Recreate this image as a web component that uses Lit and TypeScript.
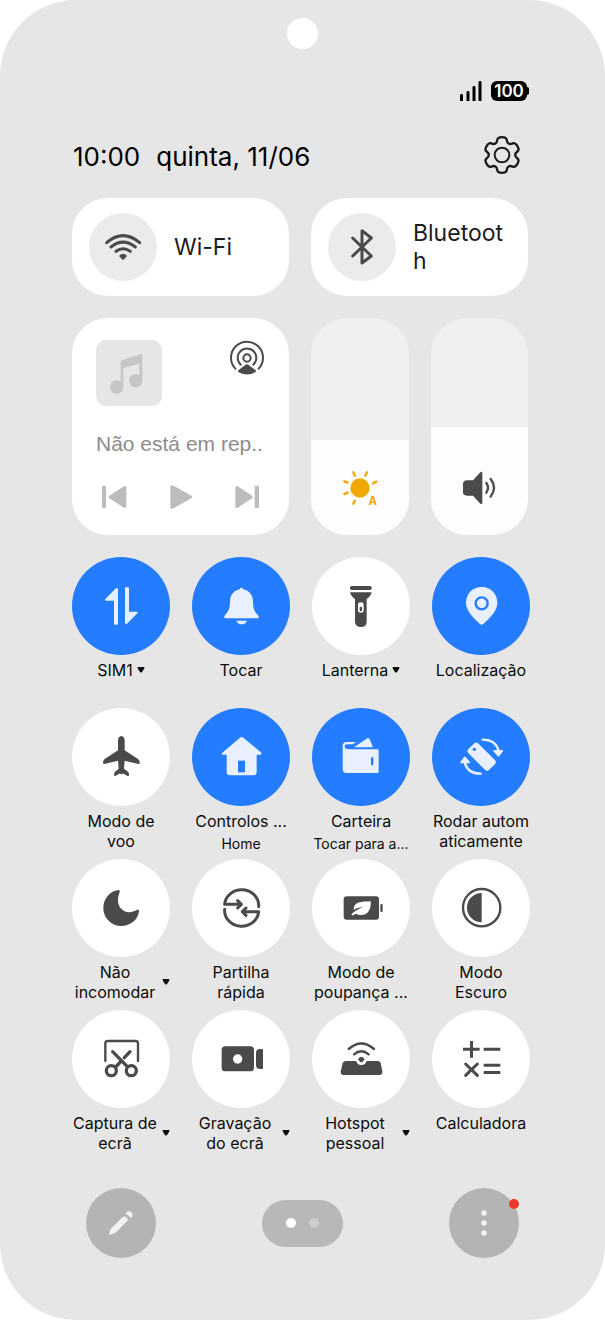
import { LitElement, html, svg, css, nothing } from "lit";
import { customElement, property, state } from "lit/decorators.js";
import { classMap } from "lit/directives/class-map.js";
import { styleMap } from "lit/directives/style-map.js";

const ACCENT = "#247cff";

// Each icon carries the centre of its drawing; the view box is built around it at 3 units per pixel.
interface Icon {
  cx: number;
  cy: number;
  art: unknown;
}

function gearPath(): string {
  const pts: [number, number][] = [];
  for (let k = 0; k < 6; k++) {
    for (const [r, d] of [[40, -22], [55, -14], [55, 14], [40, 22]]) {
      const a = ((k * 60 + d) * Math.PI) / 180;
      pts.push([Math.sin(a) * r, -Math.cos(a) * r]);
    }
  }
  const mid = (i: number) => {
    const p = pts[i % pts.length];
    const q = pts[(i + 1) % pts.length];
    return `${((p[0] + q[0]) / 2).toFixed(1)} ${((p[1] + q[1]) / 2).toFixed(1)}`;
  };
  let d = `M${mid(0)}`;
  for (let i = 1; i <= pts.length; i++) {
    const p = pts[i % pts.length];
    d += `Q${p[0].toFixed(1)} ${p[1].toFixed(1)} ${mid(i)}`;
  }
  return d + "z";
}

const line = (d: string, w: number) =>
  svg`<path d=${d} fill="none" stroke="currentColor" stroke-width=${w} stroke-linecap="round" stroke-linejoin="round"/>`;

const icons: Record<string, Icon> = {
  gear: {
    cx: 0, cy: 0,
    art: svg`${line(gearPath(), 7)}<circle r="22" fill="none" stroke="currentColor" stroke-width="6"/>`,
  },
  wifi: {
    cx: 189, cy: 170,
    art: svg`${line("M140 157Q189 115 239 157", 9)}${line("M153 170Q189 141 226 170", 9)}${line("M168 183Q189 168 211 183", 9)}
      <path d="M177 197Q189 183 201 197L192 207q-3 3-6 0z"/>`,
  },
  bluetooth: {
    cx: 906, cy: 170,
    art: line("M878 143L934 197L906 218V121L934 143L878 197", 9),
  },
  cast: {
    cx: 560, cy: 146,
    art: svg`${line("M525 178A48 48 0 1 1 595 178", 6)}${line("M541 166A28 28 0 1 1 579 166", 6)}
      <circle cx="560" cy="146" r="11" fill="none" stroke="currentColor" stroke-width="6"/>
      <path d="M556 166q4-3 8 0L586 183q2 3-1 6q-25 13-50 0q-3-3-1-6z"/>`,
  },
  note: {
    cx: 207, cy: 189,
    art: svg`<circle cx="170" cy="231" r="20"/><circle cx="227" cy="212" r="20"/>
      <path d="M182 155q0-3 3-4L244 132q3-1 3 3V212H238V161L190 174V231H182z"/>`,
  },
  previous: {
    cx: 164, cy: 562,
    art: svg`<rect x="128" y="528" width="12" height="67" rx="2"/><path d="M201 534V590q-1 7-7 4L150 566q-5-4 0-8L194 530q6-3 7 4z"/>`,
  },
  play: {
    cx: 368, cy: 562,
    art: svg`<path d="M336 531q1-6 7-4L400 558q4 4 0 7L343 597q-7 2-7-4z"/>`,
  },
  next: {
    cx: 560, cy: 562,
    art: svg`<rect x="583" y="528" width="13" height="67" rx="2"/><path d="M525 534V590q1 7 7 4L575 566q5-4 0-8L532 530q-6-3-7 4z"/>`,
  },
  sun: {
    cx: 179, cy: 533,
    art: svg`<circle cx="179" cy="533" r="29"/>
      ${line("M159 486L164 496M200 486L195 496M132 513L142 517M228 514L218 519M132 551L142 547M164 571L159 580", 7)}
      <text x="217" y="584" text-anchor="middle" font-size="34" font-weight="700">A</text>`,
  },
  speaker: {
    cx: 537, cy: 533,
    art: svg`<path d="M489 522q0-12 12-12H519L541 486q6-4 6 2V578q0 5-6 2L519 556H501q-12 0-12-10z"/>
      ${line("M559 518Q569 532 559 547", 7)}${line("M572 506Q592 532 572 559", 7)}`,
  },
  data: {
    cx: 183, cy: 180,
    art: svg`<path d="M174 129V233q0 3-3 3H165q-3 0-3-3V164H138q-5-1-2-5L168 127q5-3 6 2zM195 127q0-3 3-3H204q3 0 3 3V197H230q5 1 2 5L201 233q-5 3-6-2z"/>`,
  },
  bell: {
    cx: 543, cy: 180,
    art: svg`<path d="M545 125c3 0 4 2 5 5c18 4 29 17 29 36c0 22 4 30 16 43q4 8-4 8H498q-8 0-4-8c12-13 16-21 16-43c0-19 11-32 29-36c1-3 2-5 6-5z"/>
      <path d="M529 224H561q-4 11-16 11t-16-11z"/>`,
  },
  torch: {
    cx: 184, cy: 180,
    art: svg`<rect x="151" y="120" width="65" height="12" rx="5"/>
      <path d="M151 139H216q-2 11-15 20V228q0 15-17 15t-18-15V159q-13-9-15-20z"/>
      <rect x="175" y="169" width="17" height="31" rx="8" fill="#fff"/><rect x="180" y="182" width="7" height="14" rx="3"/>`,
  },
  pin: {
    cx: 544, cy: 180,
    art: svg`<path d="M546 123c27 0 47 20 47 47c0 22-17 41-42 64q-5 4-10 0c-25-23-42-42-42-64c0-27 20-47 47-47z"/>
      <circle cx="546" cy="172" r="18" fill="none" stroke=${ACCENT} stroke-width="7"/>`,
  },
  plane: {
    cx: 183, cy: 170,
    art: svg`<path d="M184 107c7 0 10 7 10 14V150L234 176q6 4 5 13q-1 3-4 2L194 181L192 205L204 214q4 4 3 11q-1 3-4 2L190 220q-3-1-6 3q-3-4-6-3L166 227q-4 0-4-3q0-6 3-10L176 205L174 181L133 191q-4 0-4-3q0-8 5-12L174 150V121c0-7 3-14 10-14z"/>`,
  },
  home: {
    cx: 543, cy: 170,
    art: svg`<path d="M540 112q5-4 10 0L604 157q2 5-3 6H590V215q0 10-10 10H510q-10 0-10-10V163H488q-4-2-2-5z"/>
      <rect x="534" y="181" width="21" height="35" fill=${ACCENT}/>`,
  },
  wallet: {
    cx: 184, cy: 170,
    art: svg`<path d="M129 137q0-12 12-12H169L159 132H142q-7 0-7 6q0 9 14 9H234q3 0 3 3V214q0 4-4 4H141q-12 0-12-12z"/>
      <path d="M163 141L203 114q5-2 7 3L220 141z"/><rect x="214" y="171" width="7" height="24" rx="3" fill=${ACCENT}/>`,
  },
  rotate: {
    cx: 544, cy: 170,
    art: svg`<rect x="525" y="125" width="42" height="88" rx="9" transform="rotate(-45 546 169)"/>
      <circle cx="524" cy="147" r="5" fill=${ACCENT}/>
      ${line("M549 118Q588 118 597 152", 7)}${line("M543 220Q504 220 495 186", 7)}
      <path d="M583 149H608q4 1 2 4L599 168q-3 2-5 0L581 153q-1-3 2-4zM509 189H484q-4-1-2-4L493 170q3-2 5 0L511 185q1 3-2 4z"/>`,
  },
  moon: {
    cx: 183, cy: 158,
    art: svg`<path d="M175 104q6 0 4 6c-7 20-8 38 6 52c14 13 32 9 47 1q6-1 5 5c-3 26-26 44-53 44a54 54 0 0 1-54-54c0-28 19-50 45-54z"/>`,
  },
  share: {
    cx: 543, cy: 158,
    art: svg`${line("M596 154A51 47 0 0 0 494 147H543M533 136L544 147L533 158", 9)}
      ${line("M494 162A51 47 0 0 0 596 169H548M558 158L547 169L558 180", 9)}`,
  },
  eco: {
    cx: 184, cy: 158,
    art: svg`<rect x="132" y="123" width="106" height="70" rx="9"/><rect x="242" y="146" width="7" height="24" rx="3"/>
      <path fill="#fff" d="M213 138c2 24-8 41-28 41c-8 0-12-2-16-4l-9 5q-5 1-4-4q10-10 34-21q-19 2-28 9c-1-25 24-25 51-26z"/>`,
  },
  contrast: {
    cx: 544, cy: 158,
    art: svg`<circle cx="546" cy="157" r="56" fill="none" stroke="currentColor" stroke-width="7"/><path d="M546 113A44 44 0 0 0 546 201z"/>`,
  },
  scissors: {
    cx: 183, cy: 612,
    art: svg`${line("M136 618V565q0-7 7-7H227q7 0 7 7V618", 7)}
      <circle cx="154" cy="647" r="15" fill="none" stroke="currentColor" stroke-width="10"/>
      <circle cx="214" cy="647" r="15" fill="none" stroke="currentColor" stroke-width="10"/>
      ${line("M158 590L202 635M210 590L193 608M180 622L167 636", 10)}`,
  },
  recorder: {
    cx: 543, cy: 612,
    art: svg`<rect x="485" y="574" width="97" height="75" rx="11"/><circle cx="533" cy="612" r="14" fill="#fff"/>
      <path d="M606 582q3 0 3 3V639q0 3-3 3H600q-12 0-12-11V593q0-11 12-11z"/>`,
  },
  hotspot: {
    cx: 184, cy: 612,
    art: svg`${line("M147 582Q185 549 223 582", 7)}${line("M163 598Q185 579 207 598", 7)}
      <path d="M138 618H234q7 0 9 7L248 649q1 11-9 11H132q-10 0-9-11L129 625q2-7 9-7z"/>
      <circle cx="185" cy="614" r="16" fill="#fff"/><path d="M176 611q9-11 18 0q2 4-3 7l-3 3q-3 2-6 0l-3-3q-5-3-3-7z"/>`,
  },
  calculator: {
    cx: 544, cy: 612,
    art: svg`<path d="M511 558h9v20h20v9H520v21H511V587H490V578h21zM552 578h50v9h-50zM552 626h50v9h-50zM552 648h50v9h-50z"/>
      ${line("M498 627L533 661M533 627L498 661", 9)}`,
  },
  pencil: {
    cx: 183, cy: 162,
    art: svg`<path d="M147 196L151 182Q152 179 155 176L189 143q4-3 8 0l5 5q4 4 0 8L169 189q-3 3-6 4L150 198q-3 1-3-2zM197 134l5-6q6-4 11 1q5 4 5 9q-1 4-7 10q0-7-14-14z"/>`,
  },
  more: {
    cx: 1272, cy: 162,
    art: svg`<circle cx="1272" cy="132" r="8"/><circle cx="1272" cy="162" r="8"/><circle cx="1272" cy="192" r="8"/>`,
  },
};

const icon = (name: string) => {
  const { cx, cy, art } = icons[name];
  return html`<svg class="icon" viewBox="${cx - 72} ${cy - 72} 144 144" aria-hidden="true">${art}</svg>`;
};

interface Tile {
  icon: string;
  lines: string[];
  sub?: string;
  on?: boolean;
  menu?: boolean;
}

const TILES: Tile[] = [
  { icon: "data", lines: ["SIM1"], on: true, menu: true },
  { icon: "bell", lines: ["Tocar"], on: true },
  { icon: "torch", lines: ["Lanterna"], menu: true },
  { icon: "pin", lines: ["Localização"], on: true },
  { icon: "plane", lines: ["Modo de", "voo"] },
  { icon: "home", lines: ["Controlos ..."], sub: "Home", on: true },
  { icon: "wallet", lines: ["Carteira"], sub: "Tocar para a...", on: true },
  { icon: "rotate", lines: ["Rodar autom", "aticamente"], on: true },
  { icon: "moon", lines: ["Não", "incomodar"], menu: true },
  { icon: "share", lines: ["Partilha", "rápida"] },
  { icon: "eco", lines: ["Modo de", "poupança ..."] },
  { icon: "contrast", lines: ["Modo", "Escuro"] },
  { icon: "scissors", lines: ["Captura de", "ecrã"], menu: true },
  { icon: "recorder", lines: ["Gravação", "do ecrã"], menu: true },
  { icon: "hotspot", lines: ["Hotspot", "pessoal"], menu: true },
  { icon: "calculator", lines: ["Calculadora"] },
];

const shared = css`
  * { box-sizing: border-box; }
  button {
    appearance: none;
    border: 0;
    margin: 0;
    padding: 0;
    background: none;
    color: inherit;
    font: inherit;
    cursor: pointer;
  }
  .icon {
    display: block;
    flex: none;
    width: 48px;
    height: 48px;
    fill: currentColor;
    font-family: Inter, sans-serif;
  }
`;

@customElement("quick-tile")
class QuickTile extends LitElement {
  @property({ attribute: false }) tile!: Tile;

  static styles = [
    shared,
    css`
      :host { display: block; }
      .tile { display: flex; flex-direction: column; align-items: center; gap: 5px; width: 100%; color: #0c0c0c; }
      .disc {
        display: flex;
        align-items: center;
        justify-content: center;
        width: 98px;
        height: 98px;
        border-radius: 50%;
        background: #fff;
        color: #4a4a4a;
      }
      .on { background: #247cff; color: #e8f0ff; }
      .caption { display: flex; align-items: center; justify-content: center; gap: 4px; width: 100%; font-size: 16px; line-height: 20px; }
      .text { display: flex; flex-direction: column; align-items: center; white-space: nowrap; }
      .wide .text { flex: 1; min-width: 0; }
      .sub { margin-top: 3px; font-size: 14px; }
      .arrow { flex: none; width: 8px; height: 10px; fill: currentColor; }
    `,
  ];

  render() {
    const t = this.tile;
    return html`<button class="tile" aria-pressed=${t.on ? "true" : "false"}>
      <span class=${classMap({ disc: true, on: !!t.on })}>${icon(t.icon)}</span>
      <span class=${classMap({ caption: true, wide: !!t.menu && t.lines.length > 1 })}>
        <span class="text">
          ${t.lines.map((l) => html`<span>${l}</span>`)}
          ${t.sub ? html`<span class="sub">${t.sub}</span>` : nothing}
        </span>
        ${t.menu ? html`<svg class="arrow" viewBox="0 0 8 10" aria-hidden="true"><path d="M1 2H7Q8 2 7 4L5 7Q4 8 3 7L1 4Q0 2 1 2z"/></svg>` : nothing}
      </span>
    </button>`;
  }
}

@customElement("level-slider")
class LevelSlider extends LitElement {
  @property() icon = "";
  @property() label = "";
  @property({ type: Number }) value = 50;

  static styles = [
    shared,
    css`
      :host { display: block; position: relative; }
      .range {
        appearance: none;
        display: block;
        writing-mode: vertical-lr;
        direction: rtl;
        width: 100%;
        height: 217px;
        margin: 0;
        border-radius: 36px;
        background: linear-gradient(to top, #fdfdfd var(--level), #efefef var(--level));
      }
      .range::-webkit-slider-thumb { appearance: none; width: 1px; height: 1px; opacity: 0; }
      .glyph { position: absolute; left: 0; right: 0; bottom: 23px; display: flex; justify-content: center; color: #4a4a4a; pointer-events: none; }
      .sun { color: #f0a800; }
    `,
  ];

  private onInput(e: Event) {
    this.value = Number((e.target as HTMLInputElement).value);
  }

  render() {
    return html`<input class="range" type="range" min="0" max="100" aria-label=${this.label}
        .value=${String(this.value)} @input=${this.onInput} style=${styleMap({ "--level": `${this.value}%` })} />
      <span class=${classMap({ glyph: true, sun: this.icon === "sun" })}>${icon(this.icon)}</span>`;
  }
}

@customElement("app-root")
class AppRoot extends LitElement {
  @state() private page = 0;

  static styles = [
    shared,
    css`
      :host { display: block; background: #fff; font-family: Inter, "Noto Sans", sans-serif; color: #0c0c0c; }
      .phone { display: flex; flex-direction: column; min-height: 100vh; padding-top: 18px; border-radius: 76px; background: #e6e6e6; }
      .camera { align-self: center; width: 31px; height: 31px; border-radius: 50%; background: #fff; }
      .status { display: flex; justify-content: flex-end; align-items: center; gap: 8px; height: 20px; margin: 32px 76px 0 72px; }
      .signal { width: 23px; height: 20px; }
      .battery { display: flex; align-items: center; }
      .charge { width: 36px; height: 20px; border-radius: 6px; background: #000; color: #fff; font-size: 17px; font-weight: 600; line-height: 20px; text-align: center; }
      .tip { width: 2px; height: 8px; border-radius: 0 2px 2px 0; background: #000; }
      .header { display: flex; align-items: center; justify-content: space-between; height: 48px; margin: 30px 79px 0 73px; }
      .clock { display: flex; gap: 16px; margin: 0; padding-top: 4px; font-size: 26px; font-weight: 400; line-height: 32px; color: #000; }
      .settings { color: #1c1c1c; }
      .cards { display: grid; grid-template-columns: repeat(2, minmax(0, 1fr)); gap: 22px; margin: 19px 77px 0 72px; }
      .toggle { display: flex; align-items: center; gap: 17px; height: 98px; padding: 0 17px; border-radius: 36px; background: #fff; text-align: left; }
      .ring { display: flex; flex: none; align-items: center; justify-content: center; width: 68px; height: 68px; border-radius: 50%; background: #ebebeb; color: #4a4a4a; }
      .name { min-width: 0; font-size: 23px; line-height: 28px; word-break: break-all; color: #1c1c1c; }
      .media { display: flex; flex-direction: column; height: 217px; padding: 22px 24px 12px; border-radius: 36px; background: #fff; }
      .top { display: flex; justify-content: space-between; align-items: flex-start; }
      .cover { display: flex; align-items: center; justify-content: center; width: 66px; height: 66px; border-radius: 10px; background: #e6e6e6; color: #c6c6c6; }
      .output { margin: -6px; color: #4a4a4a; }
      .track { margin: 24px 0 0; font-family: "Liberation Sans", sans-serif; font-size: 21px; line-height: 28px; white-space: nowrap; color: #8c8c8c; }
      .player { display: flex; justify-content: space-between; margin: 15px -6px 0; color: #bcbcbc; }
      .sliders { display: grid; grid-template-columns: repeat(2, minmax(0, 1fr)); gap: 22px; }
      .tiles { display: grid; grid-template-columns: repeat(4, 98px); justify-content: space-between; grid-auto-rows: 143px; gap: 8px 0; margin: 22px 75px 0 72px; }
      .footer { display: flex; align-items: center; justify-content: space-between; margin: 35px 86px 60px; }
      .round { position: relative; display: flex; align-items: center; justify-content: center; width: 70px; height: 70px; border-radius: 50%; background: #b4b4b4; color: #f2f2f2; }
      .badge { position: absolute; top: 11px; right: 0; width: 10px; height: 10px; border-radius: 50%; background: #ec3b2e; }
      .pager { display: flex; align-items: center; justify-content: center; gap: 13px; width: 81px; height: 47px; border-radius: 24px; background: #b8b8b8; }
      .dot { width: 10px; height: 10px; border-radius: 50%; background: #cdcdcd; }
      .current { background: #fff; }
    `,
  ];

  render() {
    return html`<main class="phone">
      <div class="camera"></div>
      <div class="status">
        <svg class="signal" viewBox="0 0 23 20" aria-label="Sinal"><path d="M0 14q0-1 1.500-1t1.500 1v6H0zM6.500 11q0-1 1.500-1t1.500 1v9h-3zM12.500 6q0-1 1.500-1t1.500 1v14h-3zM18.500 1q0-1 1.500-1t1.500 1v19h-3z"/></svg>
        <span class="battery"><span class="charge">100</span><span class="tip"></span></span>
      </div>
      <header class="header">
        <h1 class="clock"><span>10:00</span><span>quinta, 11/06</span></h1>
        <button class="settings" aria-label="Definições">${icon("gear")}</button>
      </header>
      <section class="cards">
        <button class="toggle" aria-pressed="false"><span class="ring">${icon("wifi")}</span><span class="name">Wi-Fi</span></button>
        <button class="toggle" aria-pressed="false"><span class="ring">${icon("bluetooth")}</span><span class="name">Bluetooth</span></button>
        <div class="media">
          <div class="top">
            <span class="cover">${icon("note")}</span>
            <button class="output" aria-label="Saída de áudio">${icon("cast")}</button>
          </div>
          <p class="track">Não está em rep..</p>
          <div class="player">
            <button aria-label="Anterior">${icon("previous")}</button>
            <button aria-label="Reproduzir">${icon("play")}</button>
            <button aria-label="Seguinte">${icon("next")}</button>
          </div>
        </div>
        <div class="sliders">
          <level-slider icon="sun" label="Brilho" .value=${44}></level-slider>
          <level-slider icon="speaker" label="Volume" .value=${50}></level-slider>
        </div>
      </section>
      <section class="tiles">${TILES.map((t) => html`<quick-tile .tile=${t}></quick-tile>`)}</section>
      <footer class="footer">
        <button class="round" aria-label="Editar">${icon("pencil")}</button>
        <div class="pager">
          ${[0, 1].map((i) => html`<button class=${classMap({ dot: true, current: this.page === i })} aria-label="Página ${i + 1}" @click=${() => (this.page = i)}></button>`)}
        </div>
        <button class="round" aria-label="Mais">${icon("more")}<span class="badge"></span></button>
      </footer>
    </main>`;
  }
}
